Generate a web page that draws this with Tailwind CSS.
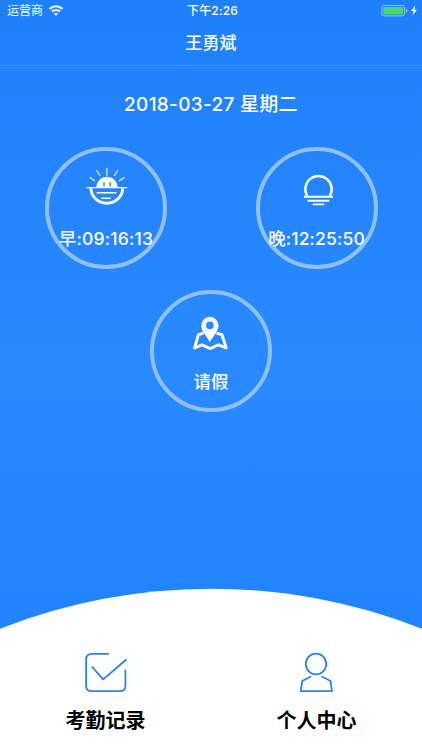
<!DOCTYPE html>
<html lang="zh-CN">
<head>
<meta charset="utf-8">
<title>考勤</title>
<script src="https://cdn.jsdelivr.net/npm/@tailwindcss/browser@4"></script>
</head>
<body class="h-[750px] w-[422px] overflow-hidden bg-white font-['Inter','Noto_Sans_CJK_SC',sans-serif]">
<div class="flex h-[750px] w-[422px] flex-col bg-linear-to-b from-[#1f80fc] via-[#2989ff] via-50% to-[#1d80ff] text-white">
  <header class="h-[66px] shrink-0 border-b border-[#3c93fd]">
    <div class="grid h-[21px] grid-cols-3 items-center pl-[7px] pr-[5px] text-[12px] leading-[21px]">
      <div class="flex items-center gap-[6px]">
        <span>运营商</span>
        <svg class="h-[11px] w-[14px]" viewBox="0 0 14 11" fill="none" stroke="white" stroke-width="2.100"><path d="M.7 3.900C4.200.4 9.800.4 13.300 3.900M3 6.600C5.200 4.500 8.800 4.500 11 6.600"/><path d="M7 10.800 4.800 8.600Q7 6.800 9.200 8.600Z" fill="white" stroke="none"/></svg>
      </div>
      <span class="pl-px text-center font-medium tracking-[.15px]">下午2:26</span>
      <div class="flex items-center justify-end gap-[3px]">
        <svg class="h-[12px] w-[27px]" viewBox="0 0 27 12"><rect x=".9" y=".5" width="22.700" height="10.400" rx="2" fill="none" stroke="#8fc1fe"/><rect x="2.300" y="1.900" width="19.900" height="7.600" rx=".8" fill="#4cd964"/><path d="M24.800 3.800Q26.500 4.300 26.500 5.700T24.800 7.600Z" fill="#8fc1fe"/></svg>
        <svg class="h-[11px] w-[6px]" viewBox="0 0 6 11" fill="white"><path d="M4.200.5.100 6h2.400l-.9 4.500L5.900 4.700H3.400Z"/></svg>
      </div>
    </div>
    <h1 class="text-center text-[17px] font-medium leading-[44px] tracking-[.2px]">王勇斌</h1>
  </header>
  <main class="flex h-[522px] shrink-0 flex-col">
    <p class="mt-[26px] h-[26px] text-center text-[19px] font-medium leading-[26px] tracking-[.3px]">2018-03-27 星期二</p>
    <div class="mt-[29px] grid grid-cols-2 justify-items-center">
      <button class="flex size-[122px] flex-col items-center rounded-full border-4 border-[#8fc1ff]">
        <svg class="mt-[16px] h-[40px] w-[44px] shrink-0" viewBox="0 0 44 40" fill="none" stroke="white">
          <path d="M12.300 20.700a10.650 11 0 0 1 21.300 0Z" fill="white" stroke="none"/>
          <path d="M20 15.200v4.300M26 15.200v4.300" stroke="#2583fe" stroke-width="1.400"/>
          <path d="M2.300 20.700H43.300" stroke-width="1.300"/>
          <path d="M6.900 21a15.900 15.300 0 0 0 31.800 0" stroke-width="2.900"/>
          <path d="M12.600 25.800h19.800M17.300 31.300h9.400" stroke-width="1.500"/>
          <path d="M22.900.7v8M12.600 3.300l3.700 5.700M33.800 3.300l-3.700 5.700M5.600 10.300l5.400 3.700M40.500 10.300l-5.500 3.700" stroke-width="1.100"/>
        </svg>
        <span class="mt-[20px] whitespace-nowrap pl-px text-[17.500px] font-medium leading-[24px] tracking-[.2px]">早:09:16:13</span>
      </button>
      <button class="flex size-[122px] flex-col items-center rounded-full border-4 border-[#8fc1ff]">
        <svg class="mt-[16px] h-[40px] w-[44px] shrink-0" viewBox="0 0 44 40" fill="none" stroke="white">
          <path d="M12.200 29A13.200 13.200 0 1 1 34.800 29" stroke-width="2.400"/>
          <path d="M9 29.700h29M12.600 33.700h21.600M17.800 37.400h11.400" stroke-width="1.900"/>
        </svg>
        <span class="mt-[20px] whitespace-nowrap text-[17.500px] font-medium leading-[24px] tracking-[.15px]">晚:12:25:50</span>
      </button>
    </div>
    <button class="mx-auto mt-[21px] flex size-[122px] flex-col items-center rounded-full border-4 border-[#8fc1ff]">
      <svg class="mt-[16px] h-[40px] w-[44px] shrink-0" viewBox="0 0 44 40" fill="none" stroke="white">
        <path d="M14.500 23.200 9.400 24.700 5.600 38 12.900 34.800 21.300 38.600 29.400 34.800 37.200 38 33 24.700 27.500 23.200" stroke-width="2.900" stroke-linejoin="round"/>
        <path fill-rule="evenodd" d="M20.900 6.800a8.700 8.700 0 0 0-8.700 8.900c0 5.500 5.500 10.200 8.700 16.400 3.200-6.200 8.700-10.900 8.700-16.400a8.700 8.700 0 0 0-8.700-8.900ZM20.900 11.600a3.800 3.800 0 1 1 0 7.600 3.800 3.800 0 0 1 0-7.600Z" fill="white" stroke="none"/>
      </svg>
      <span class="mt-[20px] text-[17.500px] font-medium leading-[24px]">请假</span>
    </button>
  </main>
  <footer class="h-[162px] shrink-0">
    <svg class="block h-[41px] w-[422px]" viewBox="0 0 422 41"><path d="M0 41V40.700A576.500 576.500 0 0 1 422 40.700V41Z" fill="white"/></svg>
    <nav class="grid h-[121px] grid-cols-2 bg-white pt-[22px] text-black">
      <a class="flex flex-col items-center">
        <svg class="h-[44px] w-[44px]" viewBox="0 0 44 44" fill="none" stroke="#2e84e6" stroke-width="1.800" stroke-linecap="round" stroke-linejoin="round"><path d="M24.300 2.900H7.700Q2.100 2.900 2.100 8.400V34.700Q2.100 40.200 7.700 40.200H35.700Q41.400 40.200 41.400 34.700V19.500"/><path d="M8.200 16 19.200 28.400 42 8.800"/></svg>
        <span class="mt-[12px] text-[20px] font-bold leading-[28px]">考勤记录</span>
      </a>
      <a class="flex flex-col items-center">
        <svg class="h-[44px] w-[44px]" viewBox="0 0 44 44" fill="none" stroke="#2e84e6" stroke-width="1.800" stroke-linecap="round" stroke-linejoin="round"><ellipse cx="21" cy="13" rx="10.200" ry="10.300"/><path d="M15.500 25.700 7.300 30 5.700 40.200H37L35.500 30 27.300 25.700"/></svg>
        <span class="mt-[12px] text-[20px] font-bold leading-[28px]">个人中心</span>
      </a>
    </nav>
  </footer>
</div>
</body>
</html>
